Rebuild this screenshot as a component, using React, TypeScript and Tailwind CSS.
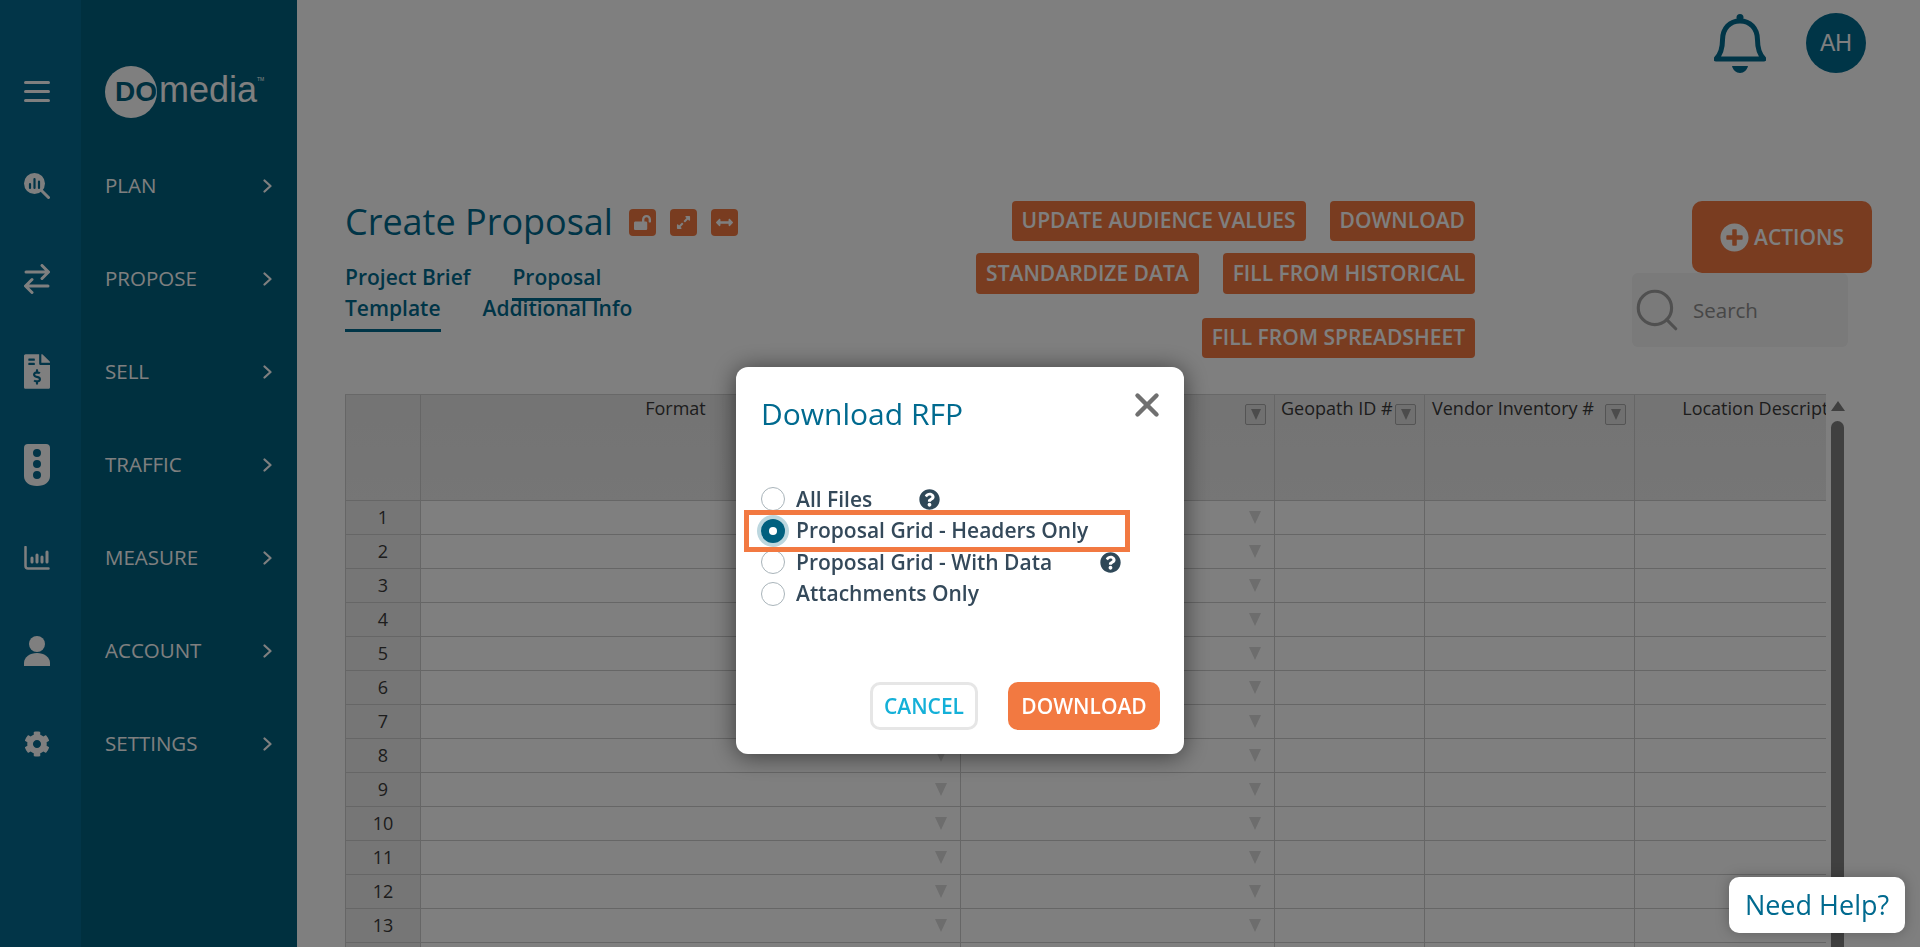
import { Search, X } from "lucide-react";
import {
  FaArrowsAltH,
  FaCog,
  FaExpandAlt,
  FaFileInvoiceDollar,
  FaLockOpen,
  FaPlusCircle,
  FaQuestionCircle,
} from "react-icons/fa";

const PlanIcon = () => (
  <svg width="26" height="26" viewBox="0 0 26 26" fill="none">
    <circle cx="10.500" cy="10.500" r="10.500" fill="currentColor" />
    <path d="M17.500 17.500l7 7" stroke="currentColor" strokeWidth="3" strokeLinecap="round" />
    <path d="M6 11v4M10.500 6v9M15 8.500V15" stroke="#046a90" strokeWidth="2.200" strokeLinecap="round" />
  </svg>
);

const ProposeIcon = () => (
  <svg width="26" height="30" viewBox="0 0 26 30" fill="none" stroke="currentColor" strokeWidth="3" strokeLinecap="round" strokeLinejoin="round">
    <path d="M2 8h22M18 1.500l6.500 6.500-6.500 6.500" />
    <path d="M24 22H2M8 15.500L1.500 22 8 28.500" />
  </svg>
);

const TrafficIcon = () => (
  <svg width="26" height="42" viewBox="0 0 26 42">
    <path
      fillRule="evenodd"
      fill="currentColor"
      d="M4 0h18a4 4 0 0 1 4 4v28c0 6-5 10-13 10S0 38 0 32V4a4 4 0 0 1 4-4zM13 5a4 4 0 1 0 0 8 4 4 0 0 0 0-8zm0 11a4 4 0 1 0 0 8 4 4 0 0 0 0-8zm0 11a4 4 0 1 0 0 8 4 4 0 0 0 0-8z"
    />
  </svg>
);

const MeasureIcon = () => (
  <svg width="26" height="24" viewBox="0 0 26 24" fill="none" stroke="currentColor" strokeLinecap="round">
    <path d="M1.500 1v19a2.500 2.500 0 0 0 2.500 2.500h20.500" strokeWidth="2.500" />
    <path d="M8 12v4M13 9v7M18 11v5M23 6v10" strokeWidth="3" />
  </svg>
);

const UserIcon = () => (
  <svg width="26" height="30" viewBox="0 0 26 30" fill="currentColor">
    <circle cx="13" cy="8" r="8" />
    <path d="M0 30v-3c0-6 6-10 13-10s13 4 13 10v3z" />
  </svg>
);

const NavChevron = () => (
  <svg width="9" height="14" viewBox="0 0 9 14" fill="none" stroke="currentColor" strokeWidth="2.200" strokeLinecap="round" strokeLinejoin="round">
    <path d="M1.500 1.500L7.500 7l-6 5.500" />
  </svg>
);

const BellIcon = () => (
  <svg width="52" height="62" viewBox="1 0 52 62" fill="none" stroke="#006a8f" strokeLinejoin="round">
    <circle cx="27" cy="4.500" r="3.500" fill="#006a8f" stroke="none" />
    <path
      d="M3 46c5-5 6.500-10 6.500-19C9.500 15 17 8 27 8s17.500 7 17.500 19c0 9 1.500 14 6.500 19z"
      strokeWidth="5"
    />
    <path d="M19 53h16c-1 4-4 7-8 7s-7-3-8-7z" fill="#006a8f" stroke="none" />
  </svg>
);

const navItems = [
  { label: "PLAN", icon: <PlanIcon /> },
  { label: "PROPOSE", icon: <ProposeIcon /> },
  { label: "SELL", icon: <FaFileInvoiceDollar className="h-[35px] w-[26px]" /> },
  { label: "TRAFFIC", icon: <TrafficIcon /> },
  { label: "MEASURE", icon: <MeasureIcon /> },
  { label: "ACCOUNT", icon: <UserIcon /> },
  { label: "SETTINGS", icon: <FaCog className="h-[26px] w-[26px]" /> },
];

const columns = [
  { label: "", filter: false, width: "w-[75px]", header: "" },
  { label: "Format", filter: true, width: "w-[540px]", header: "pr-[30px] text-center" },
  { label: "", filter: true, width: "w-[314px]", header: "" },
  { label: "Geopath ID #", filter: true, width: "w-[150px]", header: "pl-[6px] text-left" },
  { label: "Vendor Inventory #", filter: true, width: "w-[210px]", header: "pl-[7px] text-left" },
  { label: "Location Description", filter: false, width: "w-[298px]", header: "pr-[30px] text-center" },
];

const rows = Array.from({ length: 14 }, (_, i) => i + 1);

const Sidebar = () => (
  <aside className="flex h-full w-[297px] shrink-0 bg-[#00607f] text-white">
    <div className="flex w-[81px] shrink-0 flex-col items-center bg-[#046a90]">
      <div className="flex h-[185px] w-full items-start pl-[24px] pt-[81px]">
        <div className="flex w-[26px] flex-col gap-[6px]">
          <span className="h-[3px] rounded-full bg-white" />
          <span className="h-[3px] rounded-full bg-white" />
          <span className="h-[3px] rounded-full bg-white" />
        </div>
      </div>
      {navItems.map((item) => (
        <div key={item.label} className="flex h-[93px] w-full items-center justify-center pr-[7px] -translate-y-[46px]">
          {item.icon}
        </div>
      ))}
    </div>
    <div className="flex min-w-0 flex-1 flex-col pl-[24px]">
      <div className="flex h-[139px] items-start pt-[66px]">
        <div className="relative h-[52px] w-[52px] shrink-0 rounded-full bg-white">
          <span className="absolute left-[10px] top-[8px] font-['Liberation_Sans',sans-serif] text-[28px] leading-[36px] font-bold text-[#00607f]">
            DO
          </span>
        </div>
        <span className="mt-[2px] ml-[2px] font-['Liberation_Sans',sans-serif] text-[36px] leading-[44px] text-white">
          media
        </span>
        <span className="mt-[10px] font-['Liberation_Sans',sans-serif] text-[5px] leading-[6px] text-white">TM</span>
      </div>
      {navItems.map((item) => (
        <div key={item.label} className="flex h-[93px] items-center pr-[25px] text-[20.500px]">
          <span className="flex-1">{item.label}</span>
          <NavChevron />
        </div>
      ))}
    </div>
  </aside>
);

const ActionButton = ({ label, height }: { label: string; height: string }) => (
  <button type="button" className={`${height} rounded-[4px] bg-[#f27941] px-[10px] text-[21px] font-semibold whitespace-nowrap text-white`}>
    {label}
  </button>
);

const FilterButton = () => (
  <span className="flex h-[21px] w-[21px] items-center justify-center rounded-[2px] border border-[#a8a8a8] bg-[#e0e0e0]">
    <span className="h-0 w-0 border-x-[5px] border-t-[11px] border-x-transparent border-t-[#999999]" />
  </span>
);

const ProposalGrid = () => (
  <div className="flex min-h-0 flex-1">
    <div className="w-[1481px] overflow-hidden border-t border-[#d0d0d0]">
      <table className="w-[1587px] table-fixed border-collapse text-[18px] text-[#3a3a3a]">
        <colgroup>
          {columns.map((col, i) => (
            <col key={i} className={col.width} />
          ))}
        </colgroup>
        <thead>
          <tr className="h-[105px] bg-gradient-to-b from-[#e8e8e8] to-[#ececec]">
            {columns.map((col, i) => (
              <th key={i} className="relative border border-t-0 border-[#cccccc] p-0 align-top font-normal">
                <div className={`${col.header} leading-[27px] whitespace-nowrap`}>{col.label}</div>
                {col.filter && (
                  <span className="absolute top-[9px] right-[8px]">
                    <FilterButton />
                  </span>
                )}
              </th>
            ))}
          </tr>
        </thead>
        <tbody>
          {rows.map((row) => (
            <tr key={row} className="h-[34px]">
              <td className="border border-[#cccccc] bg-[#ececec] p-0 text-center">{row < 14 ? row : ""}</td>
              {columns.slice(1).map((col, i) => (
                <td key={i} className="relative border border-[#cccccc] p-0">
                  {i < 2 && (
                    <span className="absolute top-[10px] right-[13px] h-0 w-0 border-x-[6px] border-t-[13px] border-x-transparent border-t-[#dadada]" />
                  )}
                </td>
              ))}
            </tr>
          ))}
        </tbody>
      </table>
    </div>
    <div className="ml-[5px] flex w-[13px] shrink-0 flex-col items-center">
      <span className="mt-[7px] h-0 w-0 border-x-[7px] border-b-[10px] border-x-transparent border-b-[#808080]" />
      <span className="mt-[10px] w-full flex-1 rounded-t-full bg-[#808080]" />
    </div>
  </div>
);

const MainContent = () => (
  <main className="flex h-full min-w-0 flex-1 flex-col pl-[48px]">
    <div className="flex h-[201px] shrink-0 items-start justify-end gap-[40px] pt-[13px] pr-[54px]">
      <BellIcon />
      <div className="flex h-[60px] w-[60px] items-center justify-center rounded-full bg-[#006a8f] font-['Liberation_Sans',sans-serif] text-[23px] text-white">
        AH
      </div>
    </div>
    <div className="flex h-[193px] shrink-0 pr-[48px]">
      <div className="w-[625px] shrink-0">
        <div className="flex h-[61px] items-start">
          <h1 className="text-[36px] leading-[42px] text-[#006a8f]">Create Proposal</h1>
          <div className="mt-[8px] ml-[16px] flex gap-[14px] text-white">
            <span className="flex h-[27px] w-[27px] items-center justify-center rounded-[4px] bg-[#f27941]">
              <FaLockOpen size={17} />
            </span>
            <span className="flex h-[27px] w-[27px] items-center justify-center rounded-[4px] bg-[#f27941]">
              <FaExpandAlt size={15} />
            </span>
            <span className="flex h-[27px] w-[27px] items-center justify-center rounded-[4px] bg-[#f27941]">
              <FaArrowsAltH size={17} />
            </span>
          </div>
        </div>
        <div className="flex w-[330px] flex-wrap gap-x-[42px] text-[21px] font-semibold text-[#006a8f]">
          <div className="h-[31px]"><span className="block leading-[31px]">Project Brief</span></div>
          <div className="h-[31px]"><span className="block border-b-[3px] border-[#006a8f] pb-[5px] leading-[31px]">Proposal</span></div>
          <div className="h-[31px]"><span className="block border-b-[3px] border-[#006a8f] pb-[5px] leading-[31px]">Template</span></div>
          <div className="h-[31px]"><span className="block leading-[31px]">Additional Info</span></div>
        </div>
      </div>
      <div className="flex w-[505px] shrink-0 flex-col items-end">
        <div className="flex gap-[24px]">
          <ActionButton label="UPDATE AUDIENCE VALUES" height="h-[40px]" />
          <ActionButton label="DOWNLOAD" height="h-[40px]" />
        </div>
        <div className="mt-[12px] flex gap-[24px]">
          <ActionButton label="STANDARDIZE DATA" height="h-[41px]" />
          <ActionButton label="FILL FROM HISTORICAL" height="h-[41px]" />
        </div>
        <div className="mt-[24px]">
          <ActionButton label="FILL FROM SPREADSHEET" height="h-[40px]" />
        </div>
      </div>
      <div className="flex flex-1 flex-col items-end">
        <button type="button" className="flex h-[72px] w-[180px] items-center justify-center gap-[5px] rounded-[10px] bg-[#f27941] pt-[1px] text-[21px] font-semibold text-white">
          <FaPlusCircle size={29} />
          ACTIONS
        </button>
        <div className="mr-[24px] flex h-[74px] w-[216px] items-center gap-[11px] rounded-[6px] bg-[#f4f4f4]">
          <Search size={50} strokeWidth={1.500} className="text-[#a0a0a0]" />
          <span className="text-[20.500px] text-[#8e8e8e]">Search</span>
        </div>
      </div>
    </div>
    <ProposalGrid />
  </main>
);

const RadioRow = ({ label, checked, help }: { label: string; checked?: boolean; help?: string }) => (
  <label className="flex h-[31.500px] items-center">
    {checked ? (
      <span className="flex h-[24px] w-[24px] shrink-0 items-center justify-center rounded-full bg-[#00607f] shadow-[0_0_0_4px_#bcd7df]">
        <span className="h-[8px] w-[8px] rounded-full bg-white" />
      </span>
    ) : (
      <span className="h-[24px] w-[24px] shrink-0 rounded-full border border-[#a9b4ba]" />
    )}
    <span className="ml-[11px] whitespace-nowrap">{label}</span>
    {help && <FaQuestionCircle size={21} className={`${help} text-[#2f4858]`} />}
  </label>
);

const DownloadModal = () => (
  <div className="fixed inset-0 z-20 flex justify-center pt-[367px]">
    <div className="relative flex h-[387px] w-[448px] flex-col rounded-[12px] bg-white pr-[24px] pl-[25px] shadow-[0_2px_24px_rgba(0,0,0,0.55)]">
      <div className="flex h-[67px] items-start justify-between pt-[27px]">
        <h2 className="text-[30px] leading-[40px] text-[#006a8f]">Download RFP</h2>
        <X size={38} strokeWidth={2.800} className="-mt-[8.500px] -mr-[5.500px] text-[#707070]" />
      </div>
      <div className="mt-[49.500px] text-[21px] font-semibold text-[#34495a]">
        <RadioRow label="All Files" help="ml-[47px]" />
        <RadioRow label="Proposal Grid - Headers Only" checked />
        <RadioRow label="Proposal Grid - With Data" help="ml-[48px]" />
        <RadioRow label="Attachments Only" />
      </div>
      <span className="pointer-events-none absolute top-[143px] left-[8px] h-[42px] w-[386px] border-[5px] border-[#f27941]" />
      <div className="mt-auto mb-[24px] flex justify-end gap-[30px] text-[21px] font-semibold">
        <button type="button" className="h-[48px] w-[108px] rounded-[10px] border-[3px] border-[#e6e6e6] pt-[1px] text-[#14b0d8]">
          CANCEL
        </button>
        <button type="button" className="h-[48px] w-[152px] rounded-[10px] bg-[#f27941] pt-[1px] text-white">
          DOWNLOAD
        </button>
      </div>
    </div>
  </div>
);

const App = () => {
  return (
    <div className="flex h-screen overflow-hidden bg-white font-['Open_Sans',sans-serif]">
      <Sidebar />
      <MainContent />
      <div className="fixed inset-0 z-10 bg-black/50" />
      <DownloadModal />
      <div className="fixed right-[15px] bottom-[14px] z-20 flex h-[56px] w-[176px] items-center justify-center rounded-[10px] bg-white text-[27px] text-[#006a8f] shadow-[0_0_14px_rgba(0,0,0,0.25)]">
        Need Help?
      </div>
    </div>
  );
};

export default App;
